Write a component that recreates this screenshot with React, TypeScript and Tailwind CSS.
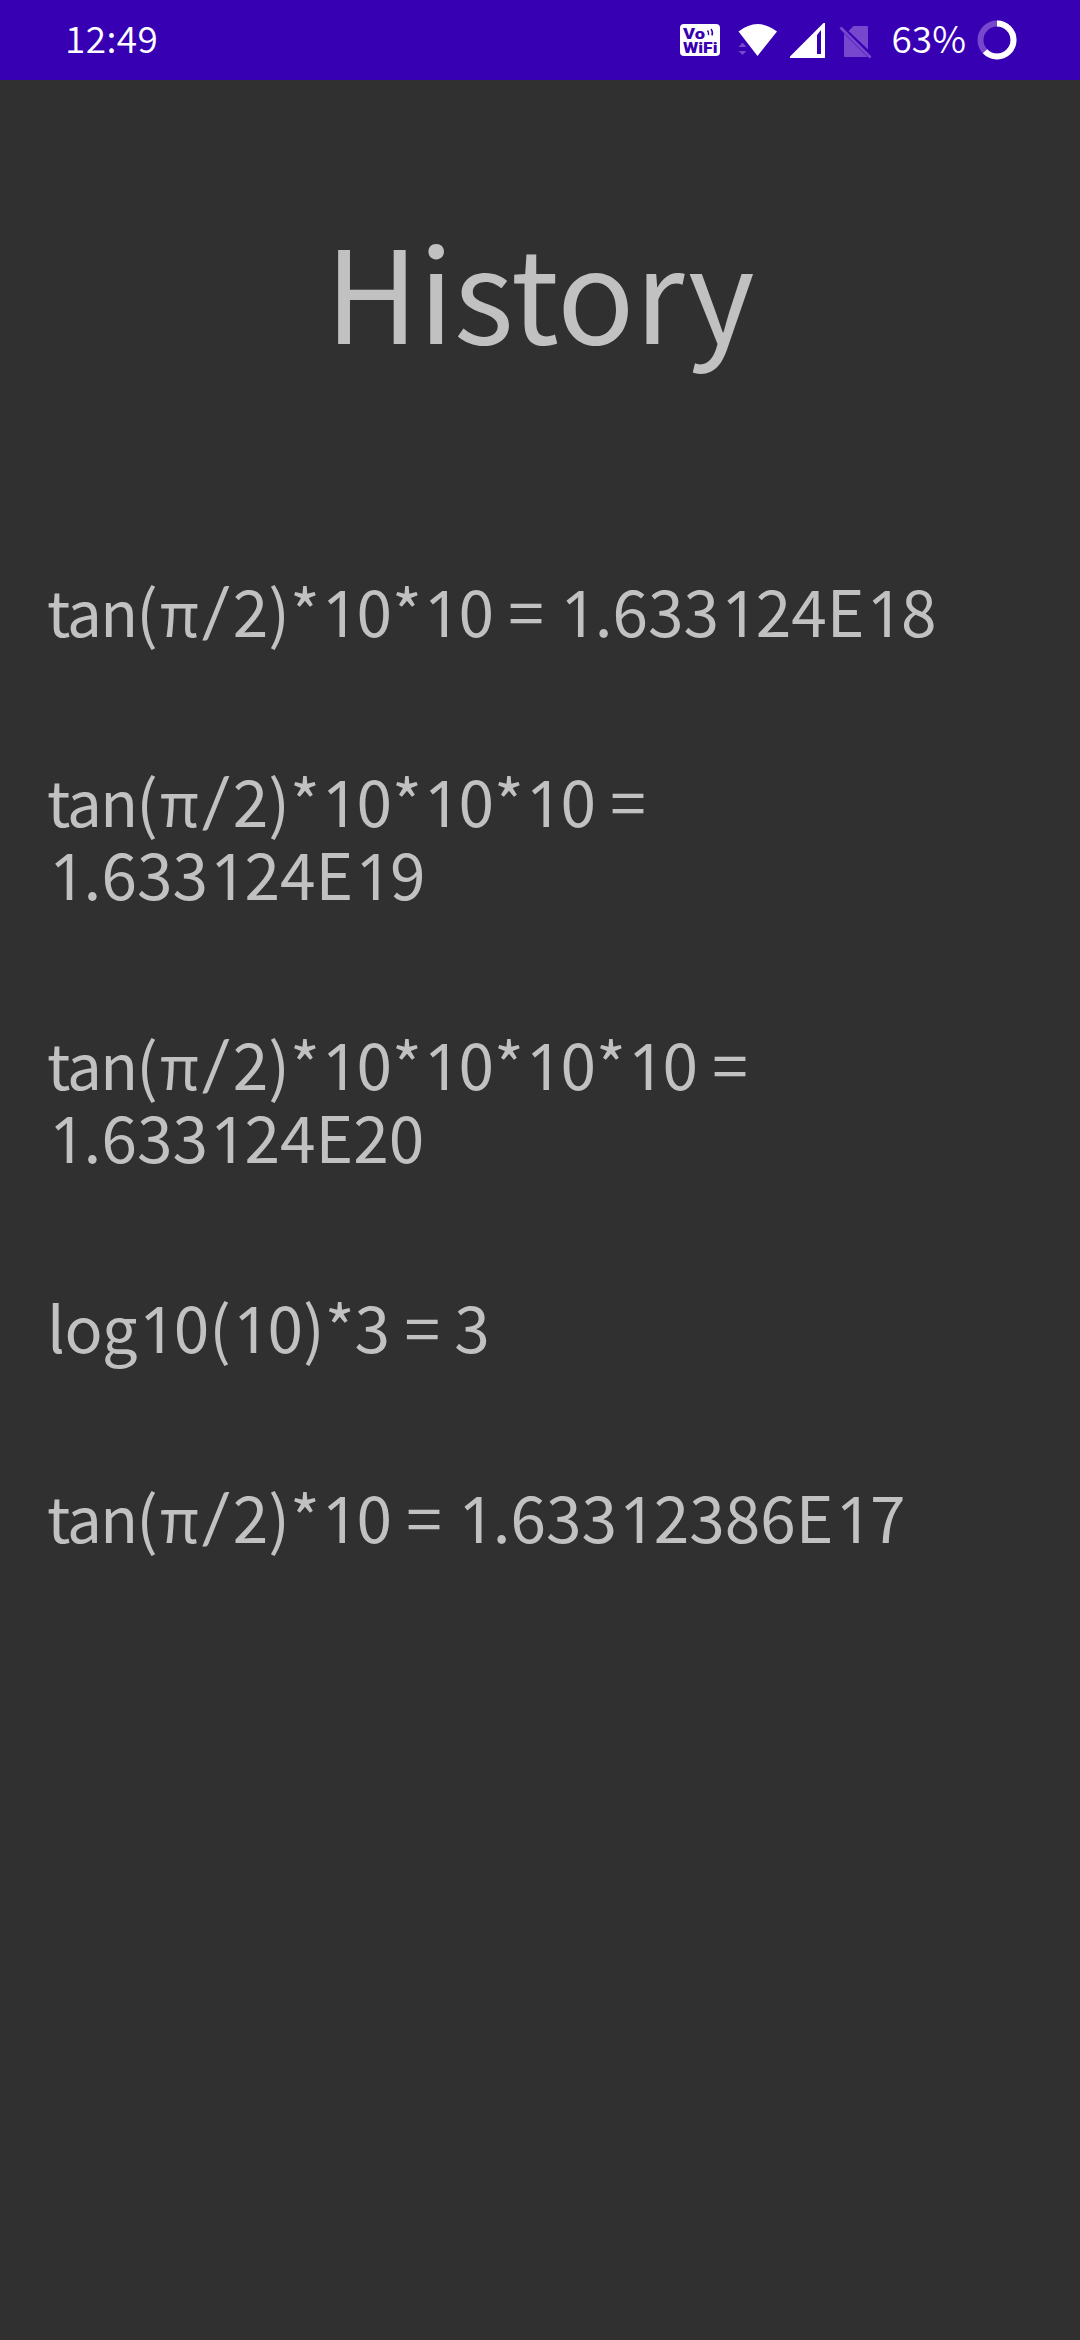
import React from "react";

const history = [
  "tan(π/2)*10*10 = 1.633124E18",
  "tan(π/2)*10*10*10 = 1.633124E19",
  "tan(π/2)*10*10*10*10 = 1.633124E20",
  "log10(10)*3 = 3",
  "tan(π/2)*10 = 1.63312386E17",
];

const tokenStyles: Record<string, string> = {
  tan: "leading-none text-[62px] tracking-[-1.8px]",
  log: "leading-none text-[63px] tracking-[-0.5px]",
  π: "leading-none ml-[2px] mr-[1px] text-[60px]",
  "1": "leading-none ml-[2.5px] mr-[-2.5px] font-['Noto_Sans',sans-serif]",
  "/": "leading-none font-['Lato',sans-serif] text-[70px] tracking-[1px]",
};

function Expression({ text }: { text: string }) {
  return (
    <p className="text-[64px] leading-[73px]">
      {text.split(/(tan|log|π|1|\/)/).map((part, i) =>
        tokenStyles[part] ? (
          <span key={i} className={tokenStyles[part]}>
            {part}
          </span>
        ) : (
          part
        ),
      )}
    </p>
  );
}

function VoWifiIcon() {
  return (
    <svg className="h-[34px] w-[42px]" viewBox="0 0 42 34">
      <rect x="1" y="1" width="40" height="32" rx="4" fill="#fff" />
      <g fill="#3700b3" fontSize="15.5" fontWeight="900" fontFamily="Roboto, sans-serif">
        <text x="4" y="16" textLength="22" lengthAdjust="spacingAndGlyphs">Vo</text>
        <text x="4" y="30" textLength="34.500" lengthAdjust="spacingAndGlyphs">WiFi</text>
      </g>
      <path d="M28.500 7.500q1.600 2 1 4.500M32 6q2.300 3 1 6.500" fill="none" stroke="#3700b3" strokeWidth="1.500" />
    </svg>
  );
}

function WifiIcon() {
  return (
    <svg className="h-[34px] w-[40px]" viewBox="0 0 40 34">
      <path d="M0.500 8.500Q19.500-6.500 39 8.500L19.500 33Z" fill="#fff" />
      <path d="M.500 24L4.500 19.500L8.500 24ZM.500 28L4.500 32L8.500 28Z" fill="#7747cd" />
    </svg>
  );
}

function SignalIcon() {
  return (
    <svg className="h-[35px] w-[36px]" viewBox="0 0 36 35">
      <path fillRule="evenodd" d="M0 35V33.500L33.500 0H35V34.500L34.500 35ZM27 31H31V7L27 12Z" fill="#fff" />
    </svg>
  );
}

function NoSimIcon() {
  return (
    <svg className="h-[33px] w-[33px]" viewBox="0 0 33 33" fill="#7747cd">
      <path d="M9.500 5L14.500 0H28Q29 0 29 1V23.500Z" />
      <path d="M5 7.500L28 30.500V31H6Q5 31 5 30Z" />
      <path d="M.500 2.500L2.500 .500L32.500 30.500L30.500 32.500Z" />
    </svg>
  );
}

function BatteryIcon() {
  return (
    <svg className="h-10 w-10 -rotate-90" viewBox="0 0 40 40" fill="none" strokeWidth="6">
      <circle cx="20" cy="20" r="16.500" stroke="#7747cd" />
      <circle cx="20" cy="20" r="16.500" stroke="#fff" pathLength="100" strokeDasharray="63 37" />
    </svg>
  );
}

export default function App() {
  return (
    <div className="h-[2340px] w-[1080px] overflow-hidden bg-[#303030] font-['Noto_Sans_CJK_SC',sans-serif] text-[#c1c1c1]">
      <header className="flex h-20 items-start bg-[#3700b3] pr-[63px] pl-[65px] text-[37px] font-[350] text-white">
        <span className="mt-[7px] leading-[60px] tracking-[0.4px]">12:49</span>
        <div className="ml-auto flex items-start">
          <div className="mt-[23px] mr-[17px]"><VoWifiIcon /></div>
          <div className="mt-[23px] mr-[12px]"><WifiIcon /></div>
          <div className="mt-[23px] mr-[13px]"><SignalIcon /></div>
          <div className="mt-[26px] mr-[20px]"><NoSimIcon /></div>
          <span className="mt-[7px] mr-[11px] leading-[60px]">63%</span>
          <div className="mt-[19.5px]"><BatteryIcon /></div>
        </div>
      </header>
      <h1 className="mt-[134px] text-center text-[128px] leading-[150px]">History</h1>
      <main className="mt-[209px] flex flex-col gap-[117px] pr-12 pl-[47px]">
        {history.map((item) => (
          <Expression key={item} text={item} />
        ))}
      </main>
    </div>
  );
}
